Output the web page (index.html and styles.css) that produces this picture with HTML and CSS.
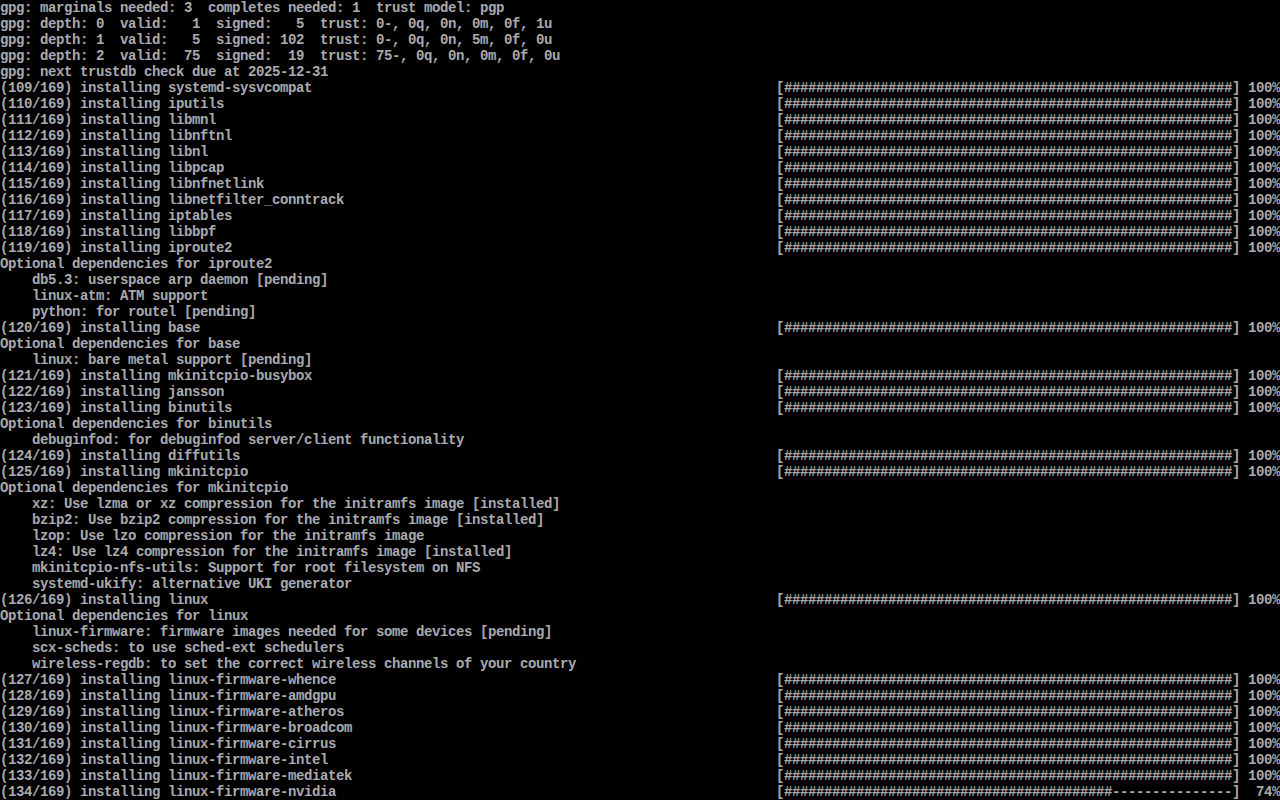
FILE: index.html
```html
<!DOCTYPE html>
<html lang="en">
<head>
    <meta charset="UTF-8">
    <title>tty1</title>
    <link rel="stylesheet" href="styles.css">
</head>
<body>
    <div class="console">
        <div class="line">gpg: marginals needed: 3  completes needed: 1  trust model: pgp</div>
        <div class="line">gpg: depth: 0  valid:   1  signed:   5  trust: 0-, 0q, 0n, 0m, 0f, 1u</div>
        <div class="line">gpg: depth: 1  valid:   5  signed: 102  trust: 0-, 0q, 0n, 5m, 0f, 0u</div>
        <div class="line">gpg: depth: 2  valid:  75  signed:  19  trust: 75-, 0q, 0n, 0m, 0f, 0u</div>
        <div class="line">gpg: next trustdb check due at 2025-12-31</div>
        <div class="line"><span>(109/169) installing systemd-sysvcompat</span><span class="bar">[########################################################] 100%</span></div>
        <div class="line"><span>(110/169) installing iputils</span><span class="bar">[########################################################] 100%</span></div>
        <div class="line"><span>(111/169) installing libmnl</span><span class="bar">[########################################################] 100%</span></div>
        <div class="line"><span>(112/169) installing libnftnl</span><span class="bar">[########################################################] 100%</span></div>
        <div class="line"><span>(113/169) installing libnl</span><span class="bar">[########################################################] 100%</span></div>
        <div class="line"><span>(114/169) installing libpcap</span><span class="bar">[########################################################] 100%</span></div>
        <div class="line"><span>(115/169) installing libnfnetlink</span><span class="bar">[########################################################] 100%</span></div>
        <div class="line"><span>(116/169) installing libnetfilter_conntrack</span><span class="bar">[########################################################] 100%</span></div>
        <div class="line"><span>(117/169) installing iptables</span><span class="bar">[########################################################] 100%</span></div>
        <div class="line"><span>(118/169) installing libbpf</span><span class="bar">[########################################################] 100%</span></div>
        <div class="line"><span>(119/169) installing iproute2</span><span class="bar">[########################################################] 100%</span></div>
        <div class="line">Optional dependencies for iproute2</div>
        <div class="line">    db5.3: userspace arp daemon [pending]</div>
        <div class="line">    linux-atm: ATM support</div>
        <div class="line">    python: for routel [pending]</div>
        <div class="line"><span>(120/169) installing base</span><span class="bar">[########################################################] 100%</span></div>
        <div class="line">Optional dependencies for base</div>
        <div class="line">    linux: bare metal support [pending]</div>
        <div class="line"><span>(121/169) installing mkinitcpio-busybox</span><span class="bar">[########################################################] 100%</span></div>
        <div class="line"><span>(122/169) installing jansson</span><span class="bar">[########################################################] 100%</span></div>
        <div class="line"><span>(123/169) installing binutils</span><span class="bar">[########################################################] 100%</span></div>
        <div class="line">Optional dependencies for binutils</div>
        <div class="line">    debuginfod: for debuginfod server/client functionality</div>
        <div class="line"><span>(124/169) installing diffutils</span><span class="bar">[########################################################] 100%</span></div>
        <div class="line"><span>(125/169) installing mkinitcpio</span><span class="bar">[########################################################] 100%</span></div>
        <div class="line">Optional dependencies for mkinitcpio</div>
        <div class="line">    xz: Use lzma or xz compression for the initramfs image [installed]</div>
        <div class="line">    bzip2: Use bzip2 compression for the initramfs image [installed]</div>
        <div class="line">    lzop: Use lzo compression for the initramfs image</div>
        <div class="line">    lz4: Use lz4 compression for the initramfs image [installed]</div>
        <div class="line">    mkinitcpio-nfs-utils: Support for root filesystem on NFS</div>
        <div class="line">    systemd-ukify: alternative UKI generator</div>
        <div class="line"><span>(126/169) installing linux</span><span class="bar">[########################################################] 100%</span></div>
        <div class="line">Optional dependencies for linux</div>
        <div class="line">    linux-firmware: firmware images needed for some devices [pending]</div>
        <div class="line">    scx-scheds: to use sched-ext schedulers</div>
        <div class="line">    wireless-regdb: to set the correct wireless channels of your country</div>
        <div class="line"><span>(127/169) installing linux-firmware-whence</span><span class="bar">[########################################################] 100%</span></div>
        <div class="line"><span>(128/169) installing linux-firmware-amdgpu</span><span class="bar">[########################################################] 100%</span></div>
        <div class="line"><span>(129/169) installing linux-firmware-atheros</span><span class="bar">[########################################################] 100%</span></div>
        <div class="line"><span>(130/169) installing linux-firmware-broadcom</span><span class="bar">[########################################################] 100%</span></div>
        <div class="line"><span>(131/169) installing linux-firmware-cirrus</span><span class="bar">[########################################################] 100%</span></div>
        <div class="line"><span>(132/169) installing linux-firmware-intel</span><span class="bar">[########################################################] 100%</span></div>
        <div class="line"><span>(133/169) installing linux-firmware-mediatek</span><span class="bar">[########################################################] 100%</span></div>
        <div class="line"><span>(134/169) installing linux-firmware-nvidia</span><span class="bar">[#########################################---------------]  74%</span></div>
    </div>
</body>
</html>
```

FILE: styles.css
```css
html, body {
    margin: 0;
    padding: 0;
    background-color: #000;
}

.console {
    width: 1280px;
    height: 800px;
    overflow: hidden;
    font-family: "Liberation Mono", "DejaVu Sans Mono", monospace;
    font-size: 14px;
    font-weight: bold;
    letter-spacing: -0.4px;
    line-height: 16px;
    color: #aaaaaa;
}

.line {
    display: flex;
    justify-content: space-between;
    height: 16px;
    white-space: pre;
}

.bar {
    width: 504px;
    overflow: hidden;
}
```
